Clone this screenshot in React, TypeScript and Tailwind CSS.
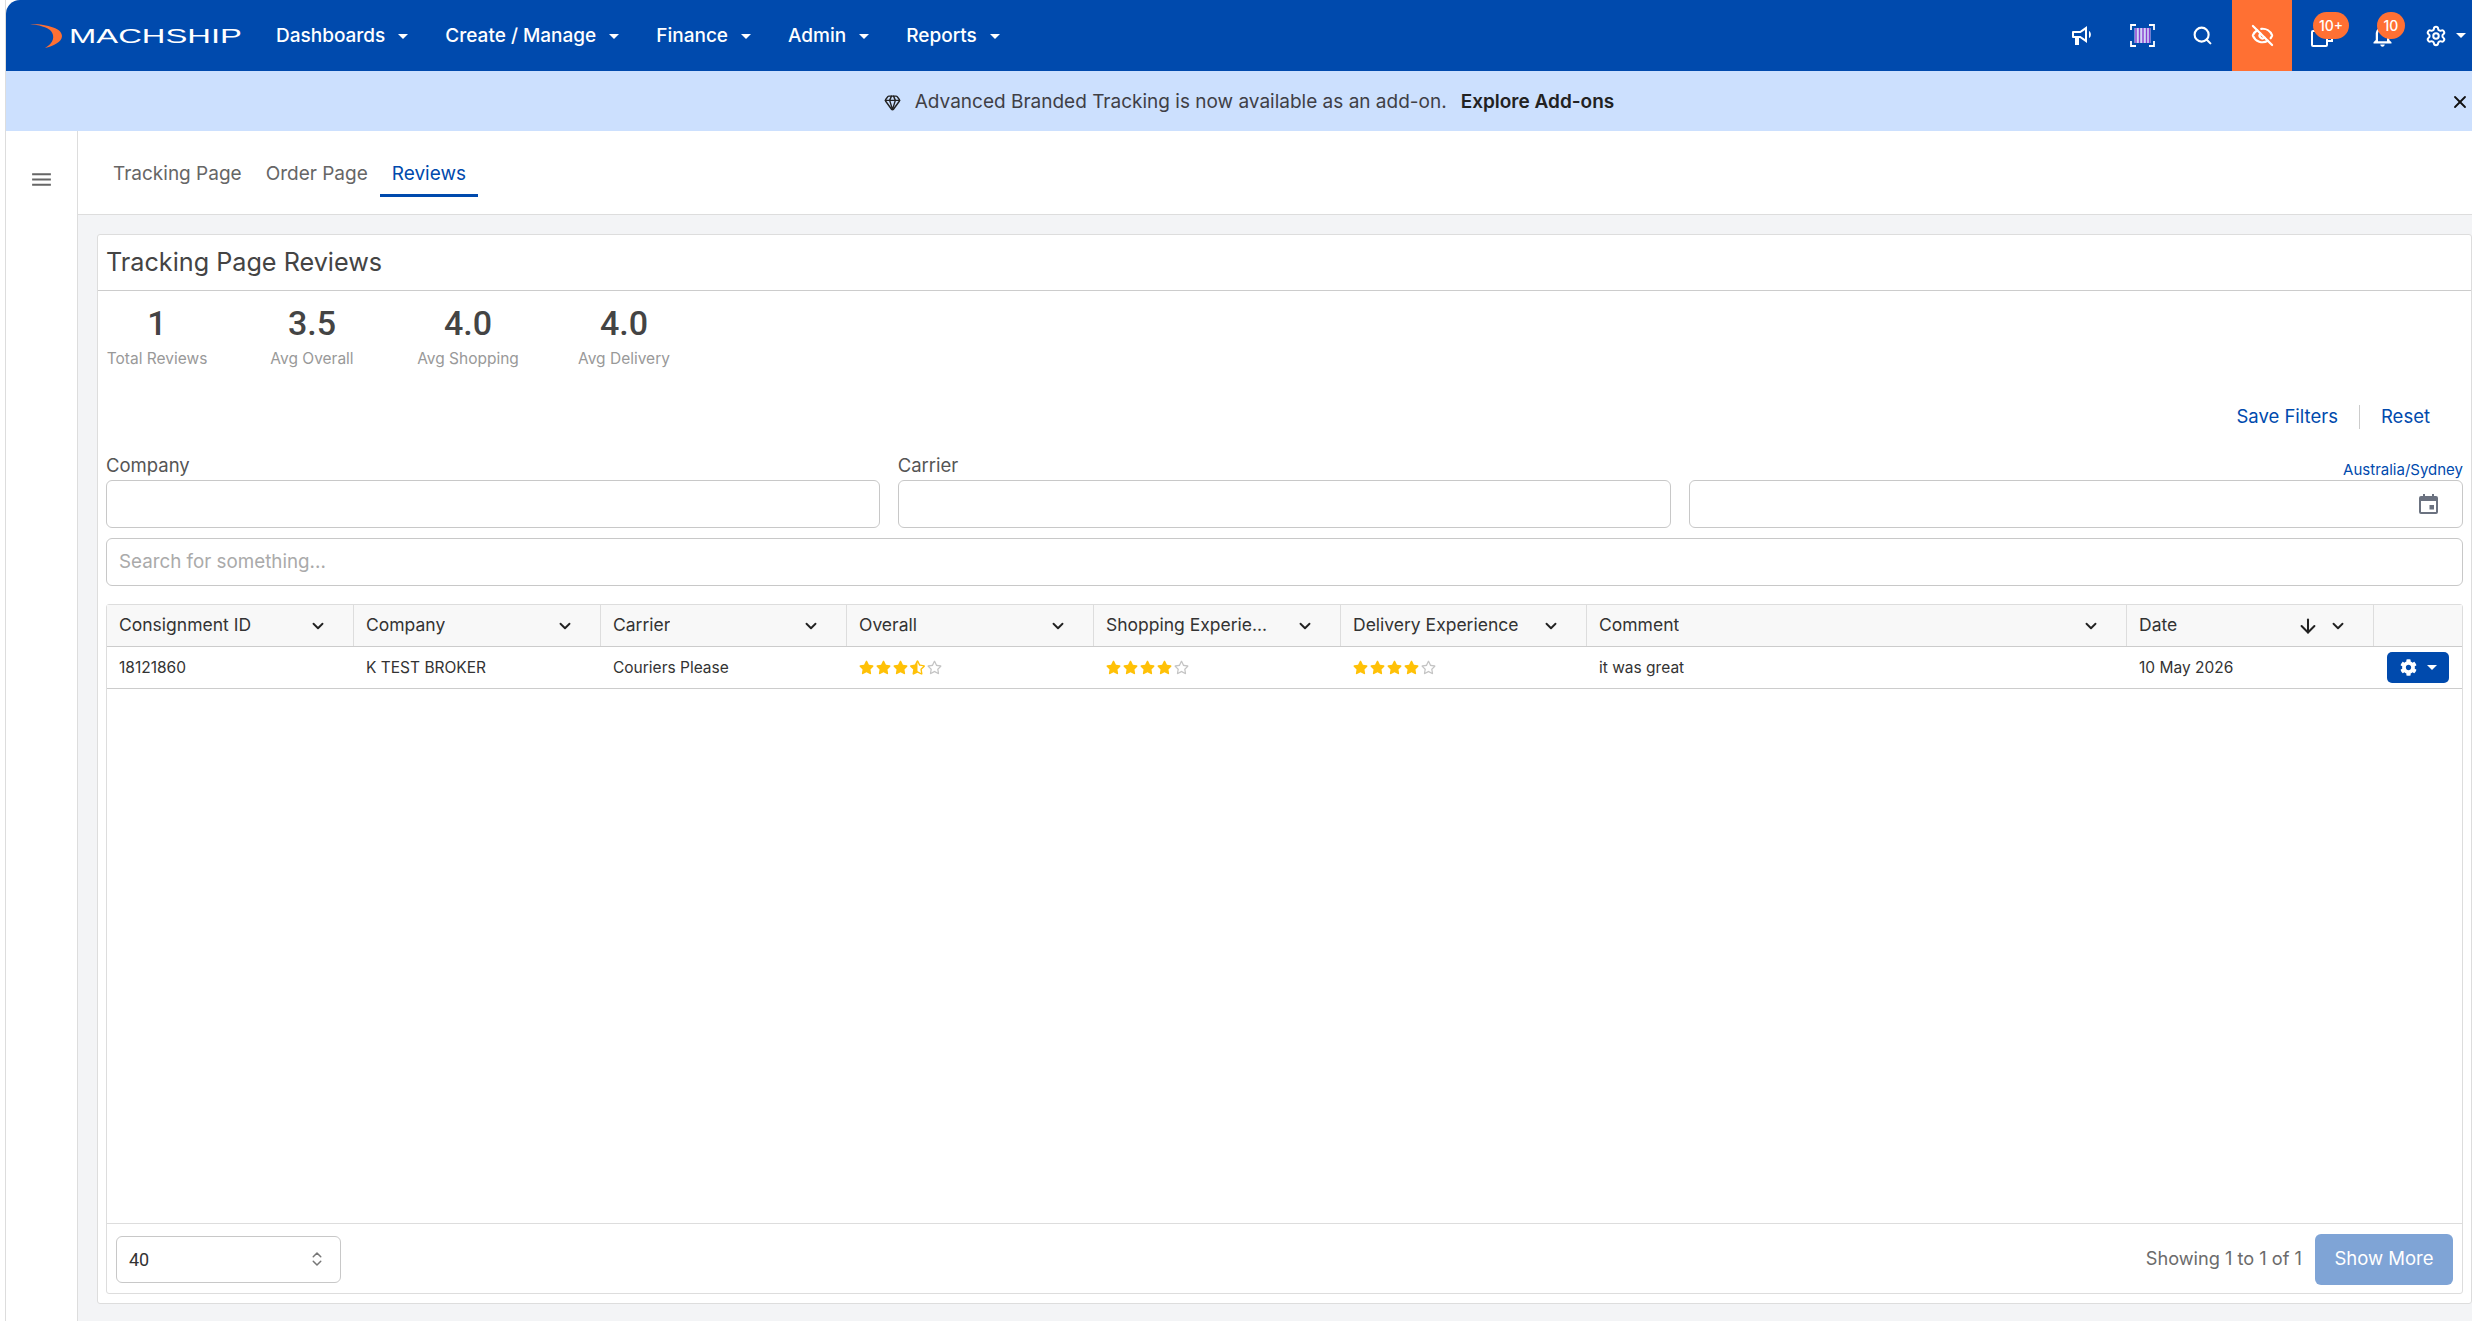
import { ArrowDown, ChevronDown, ChevronsUpDown, EyeOff, Gem, Search, Settings, X } from "lucide-react";
import { FaCog, FaRegStar, FaStar, FaStarHalfAlt } from "react-icons/fa";
import { MdMenu, MdOutlineNotifications } from "react-icons/md";

const navItems = ["Dashboards", "Create / Manage", "Finance", "Admin", "Reports"];

const stats = [
  { value: "1", label: "Total Reviews" },
  { value: "3.5", label: "Avg Overall" },
  { value: "4.0", label: "Avg Shopping" },
  { value: "4.0", label: "Avg Delivery" },
];

const columns = [
  { title: "Consignment ID", width: "w-[247px]" },
  { title: "Company", width: "w-[247px]" },
  { title: "Carrier", width: "w-[246px]" },
  { title: "Overall", width: "w-[247px]" },
  { title: "Shopping Experie...", width: "w-[247px]" },
  { title: "Delivery Experience", width: "w-[246px]" },
  { title: "Comment", width: "w-[540px]" },
];

function Caret() {
  return <span className="inline-block border-x-[5px] border-t-[5px] border-x-transparent border-t-white" />;
}

function Stars({ value }: { value: number }) {
  return (
    <div className="flex gap-[2px] text-[15px]">
      {[1, 2, 3, 4, 5].map((n) =>
        n <= value ? (
          <FaStar key={n} className="text-[#ffc107]" />
        ) : n - 0.5 === value ? (
          <FaStarHalfAlt key={n} className="text-[#ffc107]" />
        ) : (
          <FaRegStar key={n} className="text-[#c4c4c4]" />
        ),
      )}
    </div>
  );
}

function Megaphone() {
  return (
    <svg width="21" height="22" viewBox="0 0 21 22" fill="#fff">
      <path fillRule="evenodd" d="M1 6h7l7-5v17l-7-5H7v7H3v-7H1a1 1 0 0 1-1-1V7a1 1 0 0 1 1-1zM2 8v3h6.500L13 14V5L8.500 8H2z" />
      <path d="M17 6c2.500 1 2.500 6 0 7z" />
    </svg>
  );
}

function Barcode() {
  return (
    <svg width="25" height="23" viewBox="0 0 25 23" fill="none">
      <path d="M1 6V1h5M19 1h5v5M24 17v5h-5M6 22H1v-5" stroke="#fff" strokeWidth="1.800" />
      <rect x="4.500" y="4" width="16" height="15" fill="#cfd8f5" />
      <path d="M6 4v15M9.500 4v15M13 4v15M16.500 4v15M19.500 4v15" stroke="#8a3fd1" strokeWidth="1.400" />
    </svg>
  );
}

function CopyIcon() {
  return (
    <svg width="22" height="22" viewBox="0 0 22 22" fill="none" stroke="#fff" strokeWidth="2">
      <rect x="1" y="6" width="15" height="15" rx="1" />
      <path d="M6 6V1h15v15h-5" />
    </svg>
  );
}

function CalendarIcon() {
  return (
    <svg width="19" height="20" viewBox="0 0 19 20" fill="#6b7280">
      <path d="M4 0h2v2h7V0h2v2h2a2 2 0 0 1 2 2v14a2 2 0 0 1-2 2H2a2 2 0 0 1-2-2V4a2 2 0 0 1 2-2h2V0zM2 7v11h15V7H2zM10.500 11H15v4.500h-4.500V11z" fillRule="evenodd" />
    </svg>
  );
}

function Logo() {
  return (
    <div className="flex items-center pl-[24px]">
      <svg width="34" height="26" viewBox="0 0 34 26" className="-ml-[1px] shrink-0">
        <path d="M1 1C14 1 33 4 33 13 33 19 24 23 16 25 25 20 26 13 22 8 18 4 10 2 1 1z" fill="#ff7033" />
      </svg>
      <span className="ml-[6px] w-[112px] origin-left scale-x-[1.56] font-['Liberation_Sans',sans-serif] text-[21px] leading-none text-white">
        MACHSHIP
      </span>
    </div>
  );
}

function IconSlot({
  children,
  className = "",
  badge,
  badgeClass = "",
}: {
  children: React.ReactNode;
  className?: string;
  badge?: string;
  badgeClass?: string;
}) {
  return (
    <div className={`relative flex h-full w-[60px] items-center justify-center ${className}`}>
      {children}
      {badge && (
        <span className={`absolute top-[12px] flex h-[27px] items-center justify-center rounded-full bg-[#ff7033] text-[14px] font-medium text-white ${badgeClass}`}>
          {badge}
        </span>
      )}
    </div>
  );
}

function TopNav() {
  return (
    <header className="flex h-[71px] shrink-0 items-center rounded-tl-[14px] bg-[#004aad] text-white">
      <div className="flex w-[270px] shrink-0">
        <Logo />
      </div>
      <nav className="flex items-center gap-[37px] pt-[1px]">
        {navItems.map((item) => (
          <div key={item} className="flex items-center gap-[13px] text-[19px] font-medium">
            {item}
            <Caret />
          </div>
        ))}
      </nav>
      <div className="ml-auto flex h-full items-center">
        <IconSlot><Megaphone /></IconSlot>
        <IconSlot><Barcode /></IconSlot>
        <IconSlot><Search size={21} strokeWidth={2.4} /></IconSlot>
        <IconSlot className="bg-[#ff7033]"><EyeOff size={23} strokeWidth={2.3} /></IconSlot>
        <IconSlot badge="10+" badgeClass="left-[21px] w-[36px]"><CopyIcon /></IconSlot>
        <IconSlot badge="10" badgeClass="left-[25px] w-[28px]"><MdOutlineNotifications size={27} /></IconSlot>
        <div className="flex h-full w-[60px] items-center gap-[9px] pl-[13px]">
          <Settings size={22} strokeWidth={2.2} className="shrink-0" />
          <Caret />
        </div>
      </div>
    </header>
  );
}

function Banner() {
  return (
    <div className="relative flex h-[60px] shrink-0 items-center justify-center bg-[#cce0fe] pl-[20px] pt-[2px] text-[19px] text-[#3f3f46]">
      <Gem size={17} className="mr-[14px] text-[#222]" />
      <span>Advanced Branded Tracking is now available as an add-on.</span>
      <span className="ml-[14px] font-semibold text-[#222]">Explore Add-ons</span>
      <X size={20} className="absolute right-[2px] text-[#111]" strokeWidth={2.2} />
    </div>
  );
}

function Tabs() {
  return (
    <div className="flex h-[84px] shrink-0 items-end border-b border-[#ddd] bg-white pl-[23px] text-[19px] text-[#666]">
      <div className="mb-[17px] px-[12px] pb-[9px]">Tracking Page</div>
      <div className="mb-[17px] px-[12px] pb-[9px]">Order Page</div>
      <div className="mb-[17px] border-b-[3px] border-[#004aad] px-[12px] pb-[6px] text-[#004aad]">Reviews</div>
    </div>
  );
}

function Field({ label, right, children }: { label?: string; right?: string; children?: React.ReactNode }) {
  return (
    <div className="flex-1">
      <div className="flex h-[29px] justify-between">
        <span className="self-center text-[18.500px] text-[#555]">{label}</span>
        <span className="self-end text-[15px] leading-[20px] text-[#004aad]">{right}</span>
      </div>
      <div className="flex h-[48px] items-center justify-end rounded-[6px] border border-[#c8c8c8] pr-[24px]">{children}</div>
    </div>
  );
}

function ReviewsTable() {
  return (
    <div className="flex min-h-0 flex-1 flex-col rounded-[3px] border border-[#ddd]">
      <div className="flex h-[42px] shrink-0 border-b border-[#ccc] bg-[#f8f8f8] text-[17.500px] text-[#333]">
        {columns.map((col) => (
          <div key={col.title} className={`flex items-center justify-between border-r border-[#ddd] pl-[12px] pr-[26px] ${col.width}`}>
            <span className="truncate">{col.title}</span>
            <ChevronDown size={18} strokeWidth={2.5} className="shrink-0 text-[#222]" />
          </div>
        ))}
        <div className="flex w-[247px] items-center border-r border-[#ddd] pl-[12px] pr-[26px]">
          <span>Date</span>
          <ArrowDown size={22} strokeWidth={2.2} className="ml-auto mr-[10px] text-[#222]" />
          <ChevronDown size={18} strokeWidth={2.5} className="text-[#222]" />
        </div>
        <div className="flex-1" />
      </div>
      <div className="flex h-[42px] shrink-0 items-center border-b border-[#ccc] text-[15.500px] text-[#333]">
        <div className="w-[247px] pl-[12px]">18121860</div>
        <div className="w-[247px] pl-[12px]">K TEST BROKER</div>
        <div className="w-[246px] pl-[12px]">Couriers Please</div>
        <div className="w-[247px] pl-[12px]"><Stars value={3.5} /></div>
        <div className="w-[247px] pl-[12px]"><Stars value={4} /></div>
        <div className="w-[246px] pl-[12px]"><Stars value={4} /></div>
        <div className="w-[540px] pl-[12px]">it was great</div>
        <div className="w-[247px] pl-[12px]">10 May 2026</div>
        <button className="ml-[13px] flex h-[31px] w-[62px] items-center justify-center gap-[10px] rounded-[5px] bg-[#004aad] text-white">
          <FaCog size={17} />
          <Caret />
        </button>
      </div>
      <div className="flex-1" />
      <div className="flex h-[70px] shrink-0 items-center justify-between border-t border-[#ddd] px-[9px] pt-[1px]">
        <div className="flex h-[47px] w-[225px] items-center justify-between rounded-[6px] border border-[#c8c8c8] pl-[12px] pr-[14px] font-['Roboto',sans-serif] text-[18px] text-[#333]">
          40
          <ChevronsUpDown size={18} className="text-[#777]" />
        </div>
        <div className="flex items-center gap-[13px]">
          <span className="text-[18.200px] text-[#6b6b6b]">Showing 1 to 1 of 1</span>
          <button className="h-[51px] w-[138px] rounded-[6px] bg-[#7fa4d6] text-[18.500px] text-white">Show More</button>
        </div>
      </div>
    </div>
  );
}

export default function App() {
  return (
    <div className="h-screen overflow-hidden bg-white pl-[5px] font-['Inter',sans-serif]">
      <div className="flex h-full flex-col border-l border-[#ddd]">
        <TopNav />
        <Banner />
        <div className="flex min-h-0 flex-1">
          <aside className="flex w-[72px] shrink-0 justify-center border-r border-[#ddd] pt-[36px]">
            <MdMenu size={25} className="text-[#666]" />
          </aside>
          <main className="flex min-w-0 flex-1 flex-col bg-[#f3f4f6]">
            <Tabs />
            <section className="mb-[17px] ml-[19px] mt-[19px] flex min-h-0 flex-1 flex-col rounded-[3px] border border-[#ddd] bg-white">
              <h1 className="flex h-[56px] shrink-0 items-center border-b border-[#ccc] pl-[8px] pt-[1px] text-[25.200px] font-normal text-[#444]">
                Tracking Page Reviews
              </h1>
              <div className="flex min-h-0 flex-1 flex-col px-[8px] pb-[9px]">
                <div className="flex pt-[12px]">
                  {stats.map((s) => (
                    <div key={s.label} className="flex w-[156px] flex-col items-center first:mr-[26px] first:w-[102px]">
                      <span className="font-['Roboto',sans-serif] text-[34px] font-medium leading-[41px] text-[#444]">{s.value}</span>
                      <span className="mt-[3px] whitespace-nowrap text-[15.500px] leading-[24px] text-[#999]">{s.label}</span>
                    </div>
                  ))}
                </div>
                <div className="mt-[33px] flex h-[26px] shrink-0 items-center justify-end pr-[33px] text-[18.500px] text-[#004aad]">
                  <span>Save Filters</span>
                  <span className="mx-[21px] h-[24px] w-[1px] bg-[#ccc]" />
                  <span>Reset</span>
                </div>
                <div className="mt-[21px] flex shrink-0 gap-[18px]">
                  <Field label="Company" />
                  <Field label="Carrier" />
                  <Field right="Australia/Sydney"><CalendarIcon /></Field>
                </div>
                <div className="mt-[10px] flex h-[48px] shrink-0 items-center rounded-[6px] border border-[#c8c8c8] pl-[12px] text-[18.800px] text-[#aaa]">
                  Search for something...
                </div>
                <div className="mt-[18px] flex min-h-0 flex-1">
                  <ReviewsTable />
                </div>
              </div>
            </section>
          </main>
        </div>
      </div>
    </div>
  );
}
